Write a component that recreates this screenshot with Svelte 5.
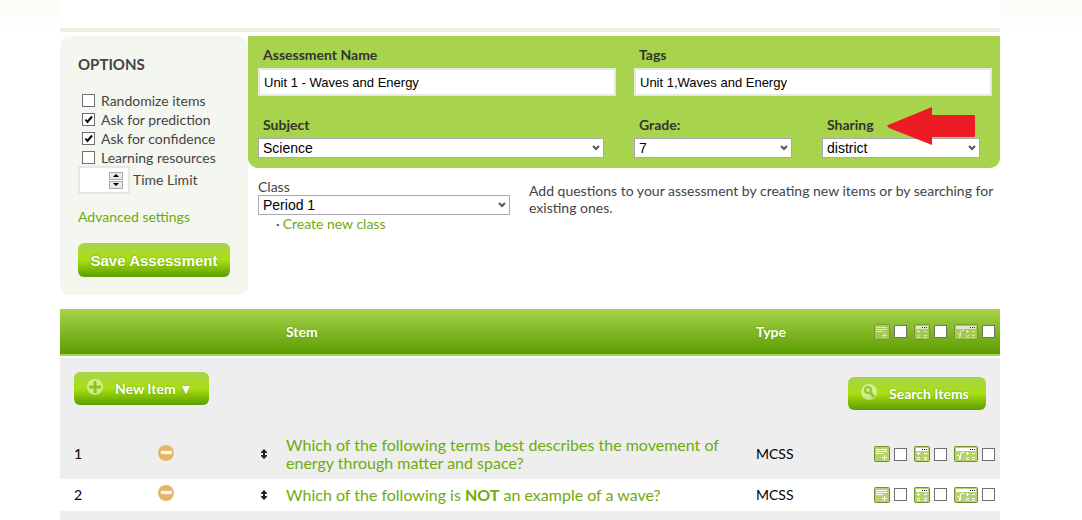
<script>
  let name = $state("Unit 1 - Waves and Energy");
  let tags = $state("Unit 1,Waves and Energy");
  let timeLimit = $state("");

  let options = $state([
    { id: "randomize", label: "Randomize items", checked: false },
    { id: "prediction", label: "Ask for prediction", checked: true },
    { id: "confidence", label: "Ask for confidence", checked: true },
    { id: "resources", label: "Learning resources", checked: false },
  ]);

  const tools = ["notes", "calculator", "scientific"];

  const items = [
    {
      before: "Which of the following terms best describes the movement of energy through matter and space?",
      type: "MCSS",
    },
    { before: "Which of the following is ", strong: "NOT", after: " an example of a wave?", type: "MCSS" },
  ];

  function step(by) {
    timeLimit = Math.max(0, Number(timeLimit) + by);
  }
</script>

{#snippet toolIcon(kind)}
  {#if kind === "notes"}
    <svg class="tool" width="16" height="16" viewBox="0 0 16 16">
      <rect x=".5" y=".5" width="15" height="15" rx="1" fill="#b5d170" stroke="#768c31" />
      <path d="M2 3h11v1H2zM2 5h11v1H2zM2 7h7v1H2zM8 11h5v1H8zM10 9h1v5h-1z" fill="#fff" />
    </svg>
  {:else if kind === "calculator"}
    <svg class="tool" width="16" height="16" viewBox="0 0 16 16">
      <rect x=".5" y=".5" width="15" height="15" rx="1" fill="#b5d170" stroke="#768c31" />
      <path d="M2 2h12v3H2z" fill="#fff" />
      <path d="M8 3h1v1H8zM10 3h1v1h-1zM12 3h1v1h-1z" />
      <path d="M3 7h3v1H3zM4 6h1v3H4zM10 7h3v1h-3zM10 11h3v1h-3zM10 13h3v1h-3z" fill="#fff" />
      <path d="M3 11h1v1H3zM5 11h1v1H5zM4 12h1v1H4zM3 13h1v1H3zM5 13h1v1H5z" fill="#fff" />
    </svg>
  {:else}
    <svg class="tool" width="24" height="16" viewBox="0 0 24 16">
      <rect x=".5" y=".5" width="23" height="15" rx="1" fill="#b5d170" stroke="#768c31" />
      <path d="M2 2h20v3H2z" fill="#fff" />
      <path d="M16 3h1v1h-1zM18 3h1v1h-1zM20 3h1v1h-1z" />
      <path d="M3 9h2v1H3zM5 10h1v4H5zM6 7h1v6H6zM7 6h3v1H7z" fill="#fff" />
      <path d="M12 7h3v1h-3zM13 6h1v3h-1zM18 7h3v1h-3zM18 11h3v1h-3zM18 13h3v1h-3z" fill="#fff" />
      <path d="M12 11h1v1h-1zM14 11h1v1h-1zM13 12h1v1h-1zM12 13h1v1h-1zM14 13h1v1h-1z" fill="#fff" />
    </svg>
  {/if}
{/snippet}

{#snippet toolBoxes(row)}
  <div class="tools">
    {#each tools as tool}
      <label>
        {@render toolIcon(tool)}
        <input type="checkbox" aria-label="{tool} {row}" />
      </label>
    {/each}
  </div>
{/snippet}

<div class="page">
  <header></header>

  <div class="top">
    <aside>
      <h2>OPTIONS</h2>
      <div class="options">
        {#each options as option}
          <label for={option.id}>
            <input type="checkbox" id={option.id} bind:checked={option.checked} />
            {option.label}
          </label>
        {/each}
      </div>
      <div class="limit">
        <div class="spinner">
          <input type="text" id="limit" bind:value={timeLimit} />
          <div class="steps">
            <button type="button" aria-label="More" onclick={() => step(1)}>
              <svg width="6" height="3" viewBox="0 0 6 3"><path d="M0 3l3-3 3 3z" /></svg>
            </button>
            <button type="button" aria-label="Less" onclick={() => step(-1)}>
              <svg width="6" height="3" viewBox="0 0 6 3"><path d="M0 0l3 3 3-3z" /></svg>
            </button>
          </div>
        </div>
        <label for="limit">Time Limit</label>
      </div>
      <a class="advanced" href="#advanced">Advanced settings</a>
      <button type="button" class="button save">Save Assessment</button>
    </aside>

    <main>
      <div class="details">
        <div class="field">
          <label for="name">Assessment Name</label>
          <input type="text" id="name" bind:value={name} />
        </div>
        <div class="field wide">
          <label for="tags">Tags</label>
          <input type="text" id="tags" bind:value={tags} />
        </div>
        <div class="field">
          <label for="subject">Subject</label>
          <select id="subject"><option>Science</option></select>
        </div>
        <div class="field">
          <label for="grade">Grade:</label>
          <select id="grade"><option>7</option></select>
        </div>
        <div class="field sharing">
          <label for="sharing">Sharing</label>
          <select id="sharing"><option>district</option></select>
          <svg class="arrow" width="88" height="38" viewBox="0 0 88 38">
            <path d="M0 18.500L45 0v8h42l1 1v20l-1 1H45v8L2 21z" fill="#ed1c24" />
          </svg>
        </div>
      </div>

      <div class="class-row">
        <div class="class-picker">
          <label for="class">Class</label>
          <select id="class"><option>Period 1</option></select>
          <ul>
            <li><a href="#new-class">Create new class</a></li>
          </ul>
        </div>
        <p>Add questions to your assessment by creating new items or by searching for existing ones.</p>
      </div>
    </main>
  </div>

  <table>
    <colgroup>
      <col class="c-number" />
      <col class="c-remove" />
      <col class="c-move" />
      <col />
      <col class="c-type" />
      <col class="c-tools" />
    </colgroup>
    <thead>
      <tr>
        <th></th>
        <th></th>
        <th></th>
        <th>Stem</th>
        <th>Type</th>
        <th>{@render toolBoxes("all")}</th>
      </tr>
    </thead>
    <tbody>
      <tr class="actions">
        <td colspan="6">
          <div class="bar">
            <button type="button" class="button new">
              <svg width="16" height="16" viewBox="0 0 16 16">
                <circle cx="8" cy="8" r="8" fill="#fff" opacity=".5" />
                <path d="M8 2v12M2 8h12" stroke="#8cc41c" stroke-width="3" />
              </svg>
              New Item ▼
            </button>
            <button type="button" class="button search">
              <svg width="16" height="16" viewBox="0 0 16 16">
                <circle cx="8" cy="8" r="8" fill="#fff" opacity=".5" />
                <circle cx="7" cy="6" r="3" fill="#c9e68d" stroke="#92c633" stroke-width="2" />
                <path d="M9 8l4 5" stroke="#92c633" stroke-width="3" />
              </svg>
              Search Items
            </button>
          </div>
        </td>
      </tr>
      {#each items as item, i}
        <tr class:even={i % 2 === 1}>
          <td class="number">{i + 1}</td>
          <td>
            <button type="button" class="plain" aria-label="Remove item {i + 1}">
              <svg width="16" height="16" viewBox="0 0 16 16">
                <circle cx="8" cy="8" r="8" fill="#e5b567" />
                <rect x="3" y="6" width="11" height="3" fill="#fff" stroke="#f1d6a8" stroke-width=".7" />
              </svg>
            </button>
          </td>
          <td>
            <svg class="move" width="6" height="10" viewBox="0 0 6 10">
              <path d="M3 0l3 3v1H4v2h2v1L3 10 0 7V6h2V4H0V3z" fill="#222" />
            </svg>
          </td>
          <td class="stem">
            <a href="#item-{i + 1}">{item.before}{#if item.strong}<strong>{item.strong}</strong>{item.after}{/if}</a>
          </td>
          <td>{item.type}</td>
          <td>{@render toolBoxes(i + 1)}</td>
        </tr>
      {/each}
      <tr class="filler"><td colspan="6"></td></tr>
    </tbody>
  </table>
</div>

<style>
  :global(body) {
    background: linear-gradient(#fafcf5, #fff 30px) no-repeat;
  }
  .page {
    margin: 0 82px 0 60px;
    background: #fff;
    color: #444;
    font: 14px/18px Lato, sans-serif;
  }
  header {
    height: 28px;
    border-bottom: 4px solid #ebeee0;
    margin-bottom: 4px;
  }
  a {
    color: #6fab0b;
    text-decoration: none;
  }
  input,
  select {
    box-sizing: border-box;
    margin: 0;
    border-radius: 0;
    background: #fff;
    color: #000;
    font: 14px "Liberation Sans", Arial, sans-serif;
  }
  input[type="text"] {
    width: 100%;
    height: 28px;
    padding: 0 4px;
    border: 2px solid #e6e8e2;
    font-size: 13px;
  }
  input[type="checkbox"] {
    appearance: none;
    flex: none;
    width: 13px;
    height: 13px;
    border: 1px solid #707070;
  }
  input[type="checkbox"]:checked {
    background: #fff url("data:image/svg+xml,%3Csvg xmlns='http://www.w3.org/2000/svg' viewBox='0 0 11 11'%3E%3Cpath d='M2.500 5.500L4.500 8 9 2.500' fill='none' stroke='%23000' stroke-width='2'/%3E%3C/svg%3E");
  }
  select {
    appearance: none;
    display: block;
    width: 100%;
    height: 20px;
    padding: 0 20px 0 4px;
    border: 1px solid #a9a9b4;
    background: #fff url("data:image/svg+xml,%3Csvg xmlns='http://www.w3.org/2000/svg' width='8' height='6' viewBox='0 0 8 6'%3E%3Cpath d='M1 1l3 3 3-3' fill='none' stroke='%23555' stroke-width='2'/%3E%3C/svg%3E") no-repeat right 3px center;
  }
  .top {
    display: flex;
    align-items: flex-start;
    margin-bottom: 14px;
  }
  aside {
    box-sizing: border-box;
    flex: none;
    width: 188px;
    padding: 19px 18px 18px;
    border-radius: 10px;
    background: #f4f7f0;
  }
  h2 {
    margin: 0 0 18px;
    font-size: 15px;
    line-height: 18px;
  }
  .options {
    padding-left: 4px;
  }
  .options label {
    display: flex;
    align-items: center;
    gap: 6px;
    height: 19px;
  }
  .limit {
    display: flex;
    align-items: center;
    gap: 3px;
    margin: -1px 0 14px;
  }
  .spinner {
    display: flex;
    align-items: center;
    box-sizing: border-box;
    width: 52px;
    height: 28px;
    padding-right: 5px;
    border: 2px solid #e6e8e2;
    background: #fff;
  }
  .spinner input[type="text"] {
    flex: 1;
    min-width: 0;
    height: 24px;
    border: 0;
  }
  .steps {
    flex: none;
    display: grid;
    gap: 1px;
    width: 14px;
  }
  .steps button {
    display: flex;
    align-items: center;
    justify-content: center;
    height: 8px;
    padding: 0;
    border: 1px solid #aaa;
    background: #e9e9e9;
  }
  .advanced {
    display: block;
    margin-bottom: 17px;
  }
  .button {
    display: flex;
    align-items: center;
    height: 33px;
    padding: 0;
    border: 0;
    border-radius: 6px;
    background: linear-gradient(#a8d34b, #a9df12 50%, #5c9d00);
    color: #fff;
    font: bold 14px Lato, sans-serif;
    text-shadow: 0 0 2px #5c9d00;
  }
  .save {
    justify-content: center;
    width: 100%;
    height: 34px;
    font: bold 15px "Liberation Sans", Arial, sans-serif;
  }
  main {
    flex: 1;
  }
  .details {
    display: grid;
    grid-template-columns: 2fr 1fr 1fr;
    row-gap: 20px;
    padding: 10px 0;
    border-radius: 0 0 10px 10px;
    background: #a8d34d;
  }
  .field {
    position: relative;
    padding: 0 8px 0 10px;
  }
  .field:has(select) {
    padding-right: 20px;
  }
  .field label {
    display: block;
    padding: 0 0 4px 5px;
    color: #333;
    font-weight: bold;
  }
  .field input {
    display: block;
  }
  .wide {
    grid-column: span 2;
  }
  .arrow {
    position: absolute;
    top: -9px;
    left: 75px;
  }
  .class-row {
    display: flex;
    gap: 19px;
    padding: 10px 0 0 10px;
  }
  .class-picker {
    flex: none;
    width: 252px;
  }
  .class-picker label {
    display: block;
    height: 17px;
  }
  ul {
    margin: 0;
    padding: 0 0 0 18px;
    list-style: none;
  }
  li::before {
    content: "·";
    margin-right: 3px;
  }
  .class-row p {
    margin: 4px 0 0;
    line-height: 17px;
  }
  table {
    width: 100%;
    border-spacing: 0;
    table-layout: fixed;
    color: #000;
  }
  .c-number {
    width: 98px;
  }
  .c-remove {
    width: 102px;
  }
  .c-move {
    width: 26px;
  }
  .c-type {
    width: 118px;
  }
  .c-tools {
    width: 126px;
  }
  thead tr {
    background: linear-gradient(#a8d34d, #5c9d00 45px);
  }
  th {
    height: 45px;
    padding: 0;
    border-bottom: 2px solid #a8d34d;
    color: #fff;
    text-align: left;
    text-shadow: 0 0 2px #5c9d00;
  }
  tbody::before {
    content: "";
    display: block;
    height: 2px;
  }
  td {
    padding: 6px 0 7px;
  }
  tbody tr {
    background: #eee;
  }
  tbody tr.even {
    background: #fff;
  }
  .number {
    padding-left: 14px;
  }
  .actions td {
    padding: 14px 14px 20px;
  }
  .bar {
    display: flex;
    justify-content: space-between;
    height: 38px;
  }
  .new,
  .search {
    gap: 12px;
    padding-left: 13px;
  }
  .new {
    width: 135px;
  }
  .search {
    align-self: flex-end;
    width: 138px;
  }
  .bar svg {
    margin-bottom: 4px;
  }
  .plain {
    display: block;
    padding: 0 0 3px;
    border: 0;
    background: none;
  }
  .plain svg,
  .move,
  .tool {
    display: block;
  }
  .move {
    margin-left: 1px;
  }
  .stem {
    padding-right: 30px;
    font-size: 16px;
  }
  .tools {
    display: flex;
    justify-content: flex-end;
    gap: 7px;
    padding-right: 5px;
  }
  .tools label {
    display: flex;
    align-items: center;
    gap: 4px;
  }
  th .tool {
    opacity: 0.7;
  }
  .filler td {
    height: 10px;
    padding: 0;
  }
</style>
